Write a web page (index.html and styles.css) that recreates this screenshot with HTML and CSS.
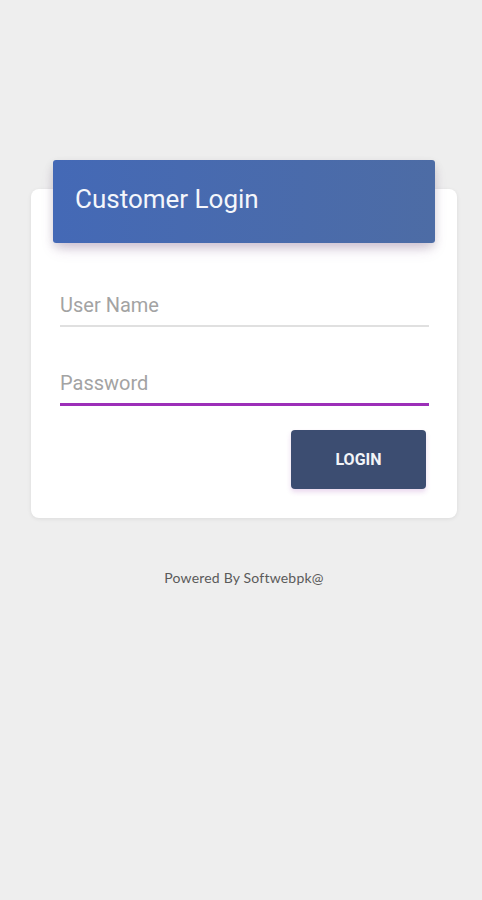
FILE: index.html
```html
<!DOCTYPE html>
<html lang="en">
<head>
  <meta charset="UTF-8">
  <meta name="viewport" content="width=device-width, initial-scale=1.0">
  <title>Customer Login</title>
  <link rel="stylesheet" href="styles.css">
</head>
<body>
  <div class="page">
    <div class="card">
      <div class="card-header">Customer Login</div>
      <form class="login-form" onsubmit="return false;">
        <input class="field" type="text" placeholder="User Name">
        <input class="field active" type="password" placeholder="Password">
        <div class="actions">
          <button class="login-btn" type="submit">LOGIN</button>
        </div>
      </form>
    </div>
    <p class="footer">Powered By Softwebpk@</p>
  </div>
</body>
</html>
```

FILE: styles.css
```css
body {
  margin: 0;
  background: #eeeeee;
  font-family: Roboto, 'Noto Sans', sans-serif;
}
.page {
  padding-top: 189px;
}
.card {
  display: flow-root;
  margin: 0 25px 0 31px;
  background: #fff;
  border-radius: 8px;
  box-shadow: 0 1px 4px rgba(0, 0, 0, 0.08);
}
.card-header {
  display: flex;
  align-items: center;
  box-sizing: border-box;
  height: 83px;
  margin: -29px 22px 0;
  padding: 0 0 6px 22px;
  background: linear-gradient(90deg, #4469b6, #4d6ca5);
  color: #f4f6fb;
  font-size: 26px;
  border-radius: 3px;
  box-shadow: 0 8px 14px -4px rgba(120, 60, 140, 0.25), 0 4px 10px rgba(0, 0, 0, 0.12);
}
.login-form {
  padding: 42px 28px 29px 29px;
}
.field {
  display: block;
  box-sizing: content-box;
  width: 100%;
  height: 39px;
  padding: 0 0 1px;
  margin-bottom: 37px;
  border: none;
  border-bottom: 2px solid #e0e0e0;
  outline: none;
  font-family: Roboto, sans-serif;
  font-size: 20px;
  color: #333;
  background: transparent;
}
.field::placeholder {
  color: #a3a3a3;
}
.field.active {
  border-bottom: 3px solid #9c2fb8;
  height: 38px;
  margin-bottom: 24px;
}
.actions {
  display: flex;
  justify-content: flex-end;
  padding-right: 3px;
}
.login-btn {
  width: 135px;
  height: 59px;
  border: none;
  border-radius: 4px;
  background: #3c4d71;
  color: #f2f4f8;
  font-family: Roboto, sans-serif;
  font-size: 16px;
  font-weight: bold;
  box-shadow: 0 3px 5px rgba(150, 60, 170, 0.2);
  cursor: pointer;
}
.footer {
  margin: 52px 0 0;
  padding-left: 6px;
  text-align: center;
  font-family: Lato, 'Open Sans', sans-serif;
  font-size: 14px;
  letter-spacing: 0.2px;
  line-height: 16px;
  color: #5a5a5a;
}
```
